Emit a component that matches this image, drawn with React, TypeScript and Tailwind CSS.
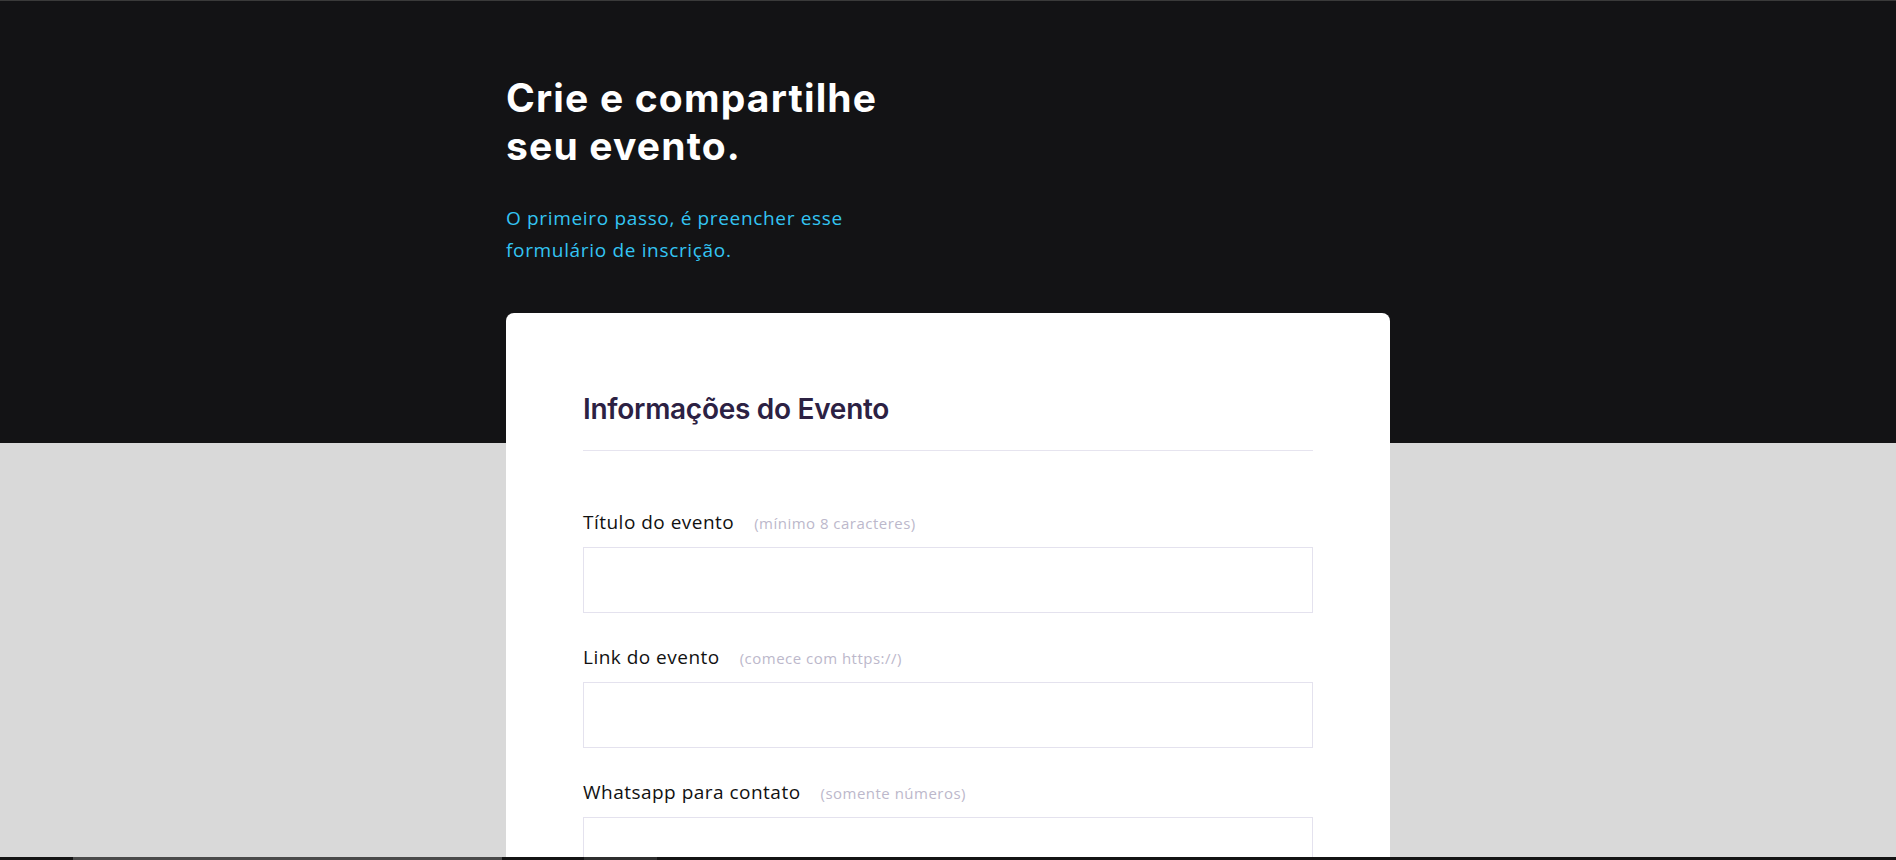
const fields = [
  { id: "titulo", label: "Título do evento", hint: "(mínimo 8 caracteres)" },
  { id: "link", label: "Link do evento", hint: "(comece com https://)" },
  { id: "whatsapp", label: "Whatsapp para contato", hint: "(somente números)" },
];

function Field({ label, hint }: { label: string; hint: string }) {
  return (
    <div className="mt-[30px] first:mt-0">
      <label className="mb-[11px] flex items-baseline gap-[20px] tracking-[0.03em]">
        <span className="text-[19px] leading-[28px] text-[#111111]">{label}</span>
        <span className="text-[15px] text-[#bcb8cb]">{hint}</span>
      </label>
      <input
        type="text"
        className="block h-[66px] w-full border border-[#e4e2ee] bg-white px-4 text-[17px] outline-none"
      />
    </div>
  );
}

export default function App() {
  return (
    <div className="min-h-screen bg-[#d9d9d9] font-['Open_Sans',sans-serif]">
      <header className="border-t border-[#3a3a3a] bg-[#131315] pt-[73px] pb-[177px]">
        <div className="mx-auto w-[884px]">
          <h1 className="max-w-[420px] font-['Inter',sans-serif] text-[39px] leading-[48px] font-bold tracking-[0.03em] text-white">
            Crie e compartilhe seu evento.
          </h1>
          <p className="mt-8 max-w-[400px] text-[19px] leading-[32px] tracking-[0.035em] text-[#33c5f3]">
            O primeiro passo, é preencher esse formulário de inscrição.
          </p>
        </div>
      </header>

      <main className="mx-auto -mt-[130px] w-[884px] pb-20">
        <form className="rounded-lg bg-white px-[77px] pt-[78px] pb-[77px]">
          <div className="border-b border-[#e6e4ef] pb-[23px]">
            <h2 className="font-['Inter',sans-serif] text-[28px] leading-[36px] font-semibold tracking-[-0.01em] text-[#2c2143]">
              Informações do Evento
            </h2>
          </div>
          <div className="mt-[57px]">
            {fields.map((f) => (
              <Field key={f.id} label={f.label} hint={f.hint} />
            ))}
          </div>
        </form>
      </main>

      {/* browser scrollbar strip at the bottom of the capture */}
      <div className="fixed inset-x-0 bottom-0 flex h-[3px] bg-[#141414]">
        <div className="ml-[73px] w-[429px] bg-[#4a4a4a]" />
        <div className="ml-[82px] w-[73px] bg-[#2e2e2e]" />
      </div>
    </div>
  );
}
